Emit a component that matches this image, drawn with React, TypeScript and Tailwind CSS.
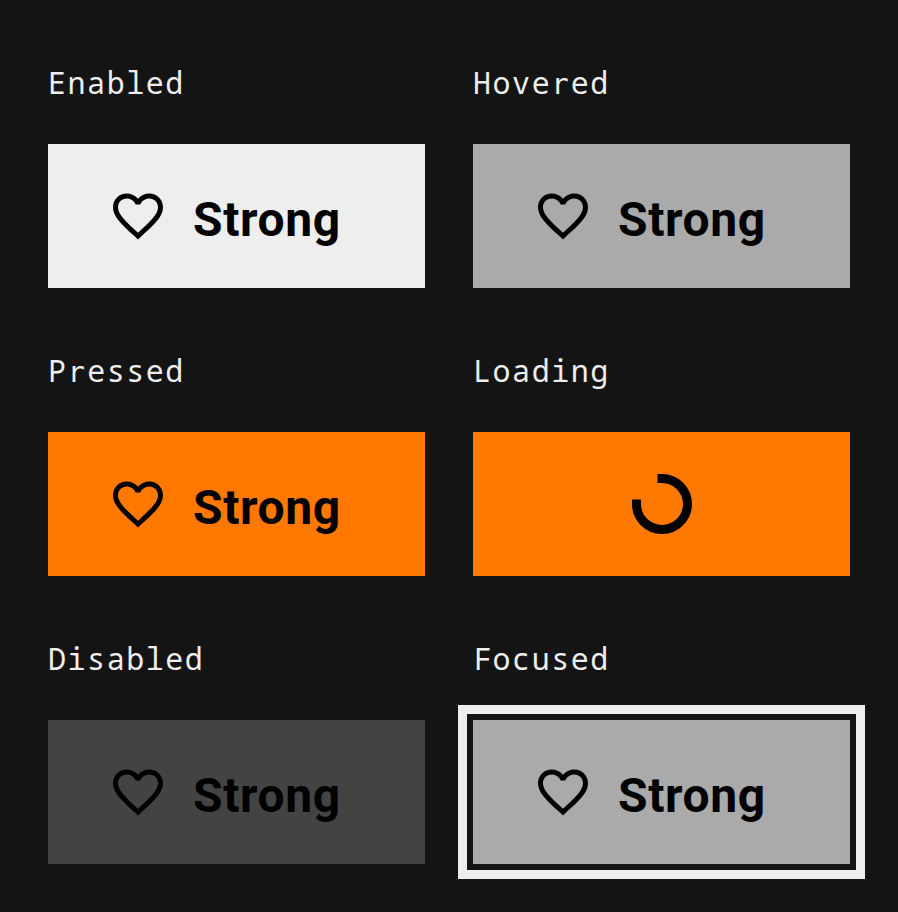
import React from 'react';

type State = 'Enabled' | 'Hovered' | 'Pressed' | 'Loading' | 'Disabled' | 'Focused';

const fills: Record<State, string> = {
  Enabled: 'bg-[#eeeeee]',
  Hovered: 'bg-[#aaaaaa]',
  Pressed: 'bg-[#ff7900]',
  Loading: 'bg-[#ff7900]',
  Disabled: 'bg-[#434343]',
  Focused: 'bg-[#aaaaaa] outline-[9px] outline-offset-[6px] outline-[#eeeeee]',
};

function Heart() {
  return (
    <svg viewBox="0 0 24 24" className="h-[60px] w-[60px] shrink-0" fill="black">
      <path d="M16.5 3c-1.74 0-3.41.81-4.5 2.09C10.91 3.81 9.24 3 7.5 3 4.42 3 2 5.42 2 8.5c0 3.78 3.4 6.86 8.55 11.54L12 21.35l1.45-1.32C18.6 15.36 22 12.28 22 8.5 22 5.42 19.58 3 16.5 3zm-4.4 15.55l-.1.1-.1-.1C7.14 14.24 4 11.39 4 8.5 4 6.5 5.5 5 7.5 5c1.54 0 3.04.99 3.57 2.36h1.87C13.46 5.99 14.96 5 16.5 5c2 0 3.5 1.5 3.5 3.5 0 2.89-3.14 5.74-7.9 10.05z" />
    </svg>
  );
}

function Spinner() {
  return (
    <svg viewBox="0 0 60 60" className="h-[60px] w-[60px]" fill="none" stroke="black" strokeWidth="9">
      <path d="M25.5 4.5H30A25.5 25.5 0 1 1 4.5 30V25.5" />
    </svg>
  );
}

// The label face has a slab "r"; the sans form comes from DejaVu, on the same advance.
function Label({ text }: { text: string }) {
  const parts = text.split(/([rF])/).filter(Boolean);
  return (
    <h2 className="h-[83px] font-['Noto_Sans_Mono',monospace] text-[30px] leading-[44px] font-normal tracking-[1.55px] text-[#eeeeee]">
      {parts.map((part, i) => {
        if (part === 'r') {
          return <span key={i} className="font-['DejaVu_Sans_Mono',monospace] text-[29px] leading-none tracking-[2.09px]">r</span>;
        }
        if (part === 'F') {
          return <span key={i} className="-mr-px ml-px">F</span>;
        }
        return part;
      })}
    </h2>
  );
}

function Sample({ state }: { state: State }) {
  return (
    <section className="h-[288px] pt-[13px]">
      <Label text={state} />
      <button className={`flex h-[144px] w-[377px] items-center text-black ${fills[state]} ${state === 'Loading' ? 'justify-center' : 'pl-[60px]'}`}>
        {state === 'Loading' ? <Spinner /> : (
          <>
            <Heart />
            <span className="mt-[8px] ml-[25px] font-[Roboto,sans-serif] text-[48px] leading-none font-bold tracking-[0.6px]">Strong</span>
          </>
        )}
      </button>
    </section>
  );
}

export default function App() {
  const states: State[] = ['Enabled', 'Hovered', 'Pressed', 'Loading', 'Disabled', 'Focused'];
  return (
    <main className="grid h-[912px] w-[898px] grid-cols-[377px_377px] content-start gap-x-12 overflow-hidden bg-[#141414] pt-12 pl-12">
      {states.map((state) => <Sample key={state} state={state} />)}
    </main>
  );
}
